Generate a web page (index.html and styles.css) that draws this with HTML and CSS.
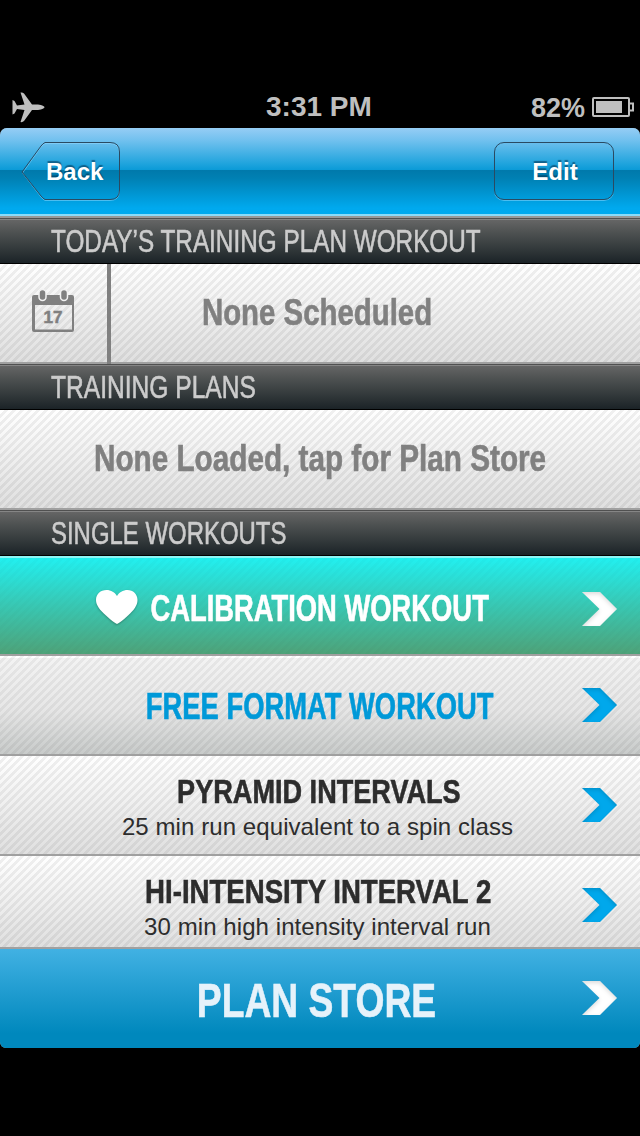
FILE: index.html
```html
<!DOCTYPE html>
<html lang="en">
<head>
    <meta charset="UTF-8">
    <meta name="viewport" content="width=device-width, initial-scale=1.0">
    <title>Workouts</title>
    <link rel="stylesheet" href="styles.css">
</head>
<body>

    <!-- shared shapes -->
    <svg class="defs" width="0" height="0">
        <defs>
            <filter id="inner" x="-10%" y="-10%" width="120%" height="120%">
                <feGaussianBlur in="SourceAlpha" stdDeviation="2" result="blur"/>
                <feOffset in="blur" dx="0" dy="2" result="off"/>
                <feComposite in="SourceAlpha" in2="off" operator="out" result="edge"/>
                <feColorMatrix in="edge" type="matrix" values="0 0 0 0 0  0 0 0 0 0  0 0 0 0 0  0 0 0 0.3 0" result="shade"/>
                <feMerge>
                    <feMergeNode in="SourceGraphic"/>
                    <feMergeNode in="shade"/>
                </feMerge>
            </filter>
            <symbol id="chevron" viewBox="0 0 36 34">
                <path d="M0 0H18L35 17L18 34H0L17.500 17Z" filter="url(#inner)"/>
            </symbol>
        </defs>
    </svg>

    <div class="status-bar">
        <svg class="plane" width="33" height="32" viewBox="0 0 33 32">
            <path d="M8.500 0.500Q10.500 0 12 1.500L20 12.500H26Q32.500 13.500 32.500 15.300Q32.500 17 26 18H20L12 29Q10.500 30.500 8.500 30L12.500 18L5 17L2.500 21.500L0.500 22.500V8L2.500 9L5 13.500L12.500 12.500Z"/>
        </svg>
        <span class="time">3:31 PM</span>
        <span class="percent">82%</span>
        <svg class="battery" width="42" height="20" viewBox="0 0 42 20">
            <rect x="1" y="1" width="36" height="18" rx="1"/>
            <path d="M38 6.500H41V13.500H38"/>
            <rect class="level" x="4" y="4" width="26" height="12"/>
        </svg>
    </div>

    <div class="app">
        <div class="nav-bar">
            <div class="back-btn">
                <svg width="100" height="60" viewBox="0 0 100 60">
                    <path class="glow" d="M24 2.500H89Q98.500 2.500 98.500 12V49.500Q98.500 59.500 89 59.500H24Q22 58.500 20 56L1.500 32L20 6Q22 3.500 24 2.500Z"/>
                    <path class="line" d="M24 1.500H89Q98.500 1.500 98.500 11V49Q98.500 58.500 89 58.500H24Q22 57.500 20 55L1 31L20 5Q22 2.500 24 1.500Z"/>
                </svg>
                <span>Back</span>
            </div>
            <div class="edit-btn">Edit</div>
        </div>

        <div class="section first"><span class="today-title">TODAY’S TRAINING PLAN WORKOUT</span></div>
        <div class="row today">
            <div class="cal">
                <svg width="44" height="44" viewBox="0 0 44 44">
                    <path class="cal-body" fill-rule="evenodd" d="M3 5H41Q43 5 43 7V40Q43 42 41 42H3Q1 42 1 40V7Q1 5 3 5ZM4 15V39.500H41V15Z"/>
                    <rect class="ring" x="8" y="-0.500" width="7" height="11" rx="3.500"/>
                    <rect class="ring" x="29.500" y="-0.500" width="7" height="11" rx="3.500"/>
                    <text x="12.500" y="33" textLength="19" lengthAdjust="spacingAndGlyphs">17</text>
                </svg>
            </div>
            <div class="label gray"><span class="scheduled">None Scheduled</span></div>
        </div>

        <div class="section"><span class="plans-title">TRAINING PLANS</span></div>
        <div class="row"><div class="label gray"><span class="loaded">None Loaded, tap for Plan Store</span></div></div>

        <div class="section"><span class="single-title">SINGLE WORKOUTS</span></div>
        <div class="row calibration">
            <div class="label">
                <svg class="heart" width="42" height="35" viewBox="0 0 42 35">
                    <path d="M21 34Q18 33 10 25.500C4 20 0 15.500 0 10C0 4 4.500 0 10.500 0C15 0 19 2.500 21 6C23 2.500 27 0 31.500 0C37 0 41.500 4 41.500 10C41.500 15.500 38 20 32 25.500Q24 33 21 34Z"/>
                </svg>
                <span>CALIBRATION WORKOUT</span>
            </div>
            <svg class="chevron white" width="36" height="34"><use href="#chevron"/></svg>
        </div>
        <div class="row free">
            <div class="label"><span>FREE FORMAT WORKOUT</span></div>
            <svg class="chevron" width="36" height="34"><use href="#chevron"/></svg>
        </div>
        <div class="row workout">
            <div class="label"><span class="pyramid">PYRAMID INTERVALS</span><small>25 min run equivalent to a spin class</small></div>
            <svg class="chevron" width="36" height="34"><use href="#chevron"/></svg>
        </div>
        <div class="row workout last">
            <div class="label"><span class="intensity">HI-INTENSITY INTERVAL 2</span><small>30 min high intensity interval run</small></div>
            <svg class="chevron" width="36" height="34"><use href="#chevron"/></svg>
        </div>
        <div class="store">
            <div class="label"><span>PLAN STORE</span></div>
            <svg class="chevron white" width="36" height="34"><use href="#chevron"/></svg>
        </div>
    </div>

</body>
</html>
```
FILE: styles.css
```css
* {
    box-sizing: border-box;
}

body {
    margin: 0;
    padding-top: 88px;
    height: 1136px;
    overflow: hidden;
    background: #000;
    font-family: "Liberation Sans", Arial, sans-serif;
}

.defs {
    position: absolute;
}

/* status bar */
.status-bar {
    display: grid;
    grid-template-columns: 254px 129px 1fr auto;
    align-items: center;
    height: 40px;
    padding: 0 6px 2px 12px;
    color: #bfbfbf;
    fill: #bfbfbf;
    font-size: 28px;
    font-weight: bold;
}

.plane {
    margin-top: 1px;
}

.percent {
    text-align: right;
    font-size: 27px;
    margin-right: 7px;
    padding-top: 2px;
}

.battery {
    fill: none;
    stroke: #bfbfbf;
    stroke-width: 2;
}

.battery .level {
    fill: #bfbfbf;
    stroke: none;
}

.app {
    height: 920px;
    border-radius: 7px 7px 6px 6px;
    overflow: hidden;
    background: #999;
}

/* navigation */
.nav-bar {
    display: flex;
    justify-content: space-between;
    height: 88px;
    padding: 14px 26px 0 20px;
    border-bottom: 2px solid #8bdcfa;
    background: linear-gradient(#96cdf5, #6fc0ee 13px, #1ba2dc 37px, #0a9ad7 42px, #0079ab 42px, #0080b3 50px, #00a9ee 80px, #00aaef);
    color: #fff;
    font-size: 24px;
    font-weight: bold;
    text-shadow: 0 -2px 1px rgba(0, 40, 70, 0.55);
}

.back-btn {
    position: relative;
    width: 100px;
    height: 60px;
    line-height: 60px;
    padding-left: 26px;
}

.back-btn svg {
    position: absolute;
    left: 1px;
    top: -1px;
    fill: none;
}

.back-btn span {
    position: relative;
}

.line {
    stroke: #2a4a62;
}

.glow {
    stroke: rgba(150, 220, 255, 0.5);
}

.edit-btn {
    width: 120px;
    height: 58px;
    line-height: 58px;
    padding-left: 2px;
    text-align: center;
    border: 1px solid #2a4a62;
    border-radius: 10px;
    box-shadow: 0 1px rgba(150, 220, 255, 0.5);
}

/* section headings */
.section {
    height: 46px;
    padding-left: 51px;
    line-height: 45px;
    border-top: 1px solid #505050;
    border-bottom: 1px solid #000;
    background: linear-gradient(#858585 1px, #656565 1px, #4d5151 14px, #1b2327);
    color: #ccc;
    font-size: 32px;
    white-space: nowrap;
}

.section.first {
    margin-top: 2px;
}

/* condensed lettering */
.section span,
.label span {
    display: inline-block;
    transform: scaleX(0.76);
    -webkit-text-stroke: 0.6px currentColor;
}

.section span {
    transform-origin: left;
}

.section .plans-title {
    transform: scaleX(0.768);
}

.section .single-title {
    transform: scaleX(0.748);
}

.label .scheduled {
    transform: scaleX(0.816);
}

.label .loaded {
    transform: scaleX(0.825);
}

.label .pyramid {
    transform: scaleX(0.797);
}

.label .intensity {
    transform: scaleX(0.812);
}

/* rows */
.row {
    display: flex;
    align-items: center;
    position: relative;
    height: 100px;
    border-bottom: 2px solid #a0a0a0;
    background:
        linear-gradient(135deg, transparent 25%, rgba(0, 0, 0, 0.06) 25% 50%, transparent 50% 75%, rgba(0, 0, 0, 0.06) 75%) 0 0 / 8px 8px,
        linear-gradient(#fff, #dfdfdf);
}

.cal {
    display: flex;
    align-items: center;
    width: 111px;
    height: 100px;
    margin-bottom: -2px;
    padding: 0 0 4px 31px;
    border-right: 4px solid #808080;
    fill: #808080;
}

.cal svg {
    overflow: visible;
}

.cal text {
    font-size: 17px;
    font-weight: bold;
    stroke: #808080;
    stroke-width: 0.5;
}

.ring {
    stroke: #f2f2f2;
    stroke-width: 1.5;
}

.label {
    flex: 1;
    display: flex;
    justify-content: center;
    align-items: center;
    font-size: 36px;
    font-weight: bold;
    line-height: 40px;
    white-space: nowrap;
}

.gray {
    color: #808080;
}

.today .label {
    padding-right: 117px;
}

.calibration {
    border-top: 2px solid #8df5f5;
    background:
        linear-gradient(135deg, transparent 25%, rgba(0, 0, 0, 0.015) 25% 50%, transparent 50% 75%, rgba(0, 0, 0, 0.015) 75%) 0 0 / 8px 8px,
        linear-gradient(#22f0f0, #38c9b5 48%, #4ea379);
    color: #fff;
}

.calibration .label {
    padding: 6px 55px 0 0;
}

.calibration .label span {
    margin-right: -53px;
    margin-left: -53px;
}

.heart {
    position: relative;
    top: -2px;
    fill: #fff;
    margin-right: 12px;
    filter: drop-shadow(0 1px 1px rgba(0, 0, 0, 0.3));
}

.free {
    background:
        linear-gradient(135deg, transparent 25%, rgba(0, 0, 0, 0.05) 25% 50%, transparent 50% 75%, rgba(0, 0, 0, 0.05) 75%) 0 0 / 8px 8px,
        linear-gradient(#fff 2px, #f3f3f3 2px, #e6e6e6 55%, #c8cbca);
    color: #0099d8;
}

.free .label {
    padding: 4px 1px 0 0;
}

.workout {
    align-items: flex-start;
    color: #2d2d2d;
}

.workout .label {
    flex-direction: column;
    padding: 15px 3px 0 0;
    font-size: 34px;
}

.workout small {
    margin: 1px 2px 0 0;
    font-size: 24px;
    font-weight: normal;
    line-height: 30px;
    letter-spacing: 0.08px;
}

.last {
    height: 93px;
}

.chevron {
    position: absolute;
    right: 22px;
    top: 32px;
    fill: #00a8ec;
}

.chevron.white {
    fill: #fff;
}

.calibration .chevron {
    top: 34px;
}

.store {
    display: flex;
    position: relative;
    height: 99px;
    background: linear-gradient(#41b1e3, #0088bd 85%);
    color: #e6f2fa;
}

.store .label {
    padding: 3px 8px 0 0;
    font-size: 49px;
}
```
